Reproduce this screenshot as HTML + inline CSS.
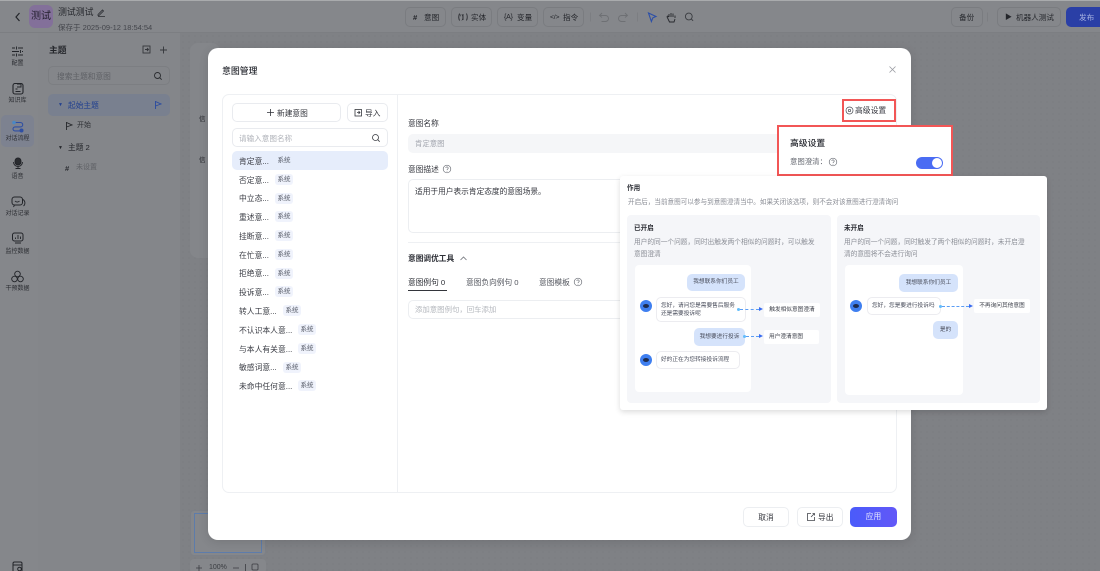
<!DOCTYPE html>
<html lang="zh"><head><meta charset="utf-8"><style>
*{box-sizing:border-box}
html,body{margin:0;padding:0}
body{width:1100px;height:571px;overflow:hidden;position:relative;background:#7f8185;font-family:"Liberation Sans","Noto Sans CJK SC",sans-serif;color:#2a2c33}
#w{position:absolute;left:0;top:0;width:1100px;height:571px;overflow:hidden;filter:blur(.35px)}
.a{position:absolute}
.t{position:absolute;white-space:nowrap;line-height:1.2;transform:translateY(1px)}
svg{position:absolute;overflow:visible;fill:none}
.tag{position:absolute;height:11px;width:18px;background:#f0f3fc;border-radius:3px;font-size:6.5px;line-height:11px;text-align:center;color:#555a66}
.it{position:absolute;left:239px;font-size:7.800px;line-height:10px;color:#3a3c44;white-space:nowrap;transform:translateY(1px)}
.tb{position:absolute;top:7px;height:20px;border:1px solid #7a7c80;border-radius:5px}
.tt{position:absolute;top:12px;font-size:7.600px;line-height:10px;color:#24262b;white-space:nowrap;transform:translateY(1px)}
.side{position:absolute;left:0;width:35px;text-align:center;font-size:6px;color:#2a2c31;line-height:8px;transform:translateY(1px)}
.bub{position:absolute;background:#d5e3fb;border-radius:5px;font-size:5.700px;color:#4a4e5c;text-align:center;white-space:nowrap}
.wb{position:absolute;background:#fff;border:1px solid #ececf0;border-radius:5px;font-size:5.700px;line-height:8px;color:#4a4e5c;white-space:nowrap}
.lab{position:absolute;background:#fff;border-radius:2px;font-size:5.700px;color:#3d404a;text-align:center;white-space:nowrap}
.av{position:absolute;width:12px;height:12px;border-radius:50%;background:#3f7ff0}
.av:after{content:"";position:absolute;left:3px;top:4px;width:6px;height:4px;border-radius:50%;background:#1e2c4e}
.dash{position:absolute;height:0;border-top:1px dashed #5a9df5}
.dot{position:absolute;width:3px;height:3px;border-radius:50%;background:#63bdfb}
.tri{position:absolute;width:0;height:0;border-left:4px solid #3a6cf0;border-top:2.5px solid transparent;border-bottom:2.5px solid transparent}
.d{font-size:6.700px;color:#8b8e96}
</style></head><body><div id="w">

<!-- page background -->
<div class="a" style="left:0;top:0;width:1100px;height:1px;background:#a9abad"></div>
<div class="a" style="left:0;top:1px;width:1100px;height:32px;background:#85878b;border-bottom:1px solid #7c7e82"></div>
<div class="a" style="left:0;top:33px;width:38px;height:538px;background:#85878b"></div>
<div class="a" style="left:38px;top:33px;width:142px;height:538px;background:#84868a"></div>
<div class="a" style="left:180px;top:33px;width:920px;height:538px;background:radial-gradient(#777a7e .6px,transparent .8px) 0 0/6px 6px #7f8185"></div>
<div class="a" style="left:1px;top:115px;width:33px;height:32px;background:#7d8290;border-radius:5px"></div>

<!-- header left -->
<svg style="left:0;top:0" width="30" height="34"><path d="M19.500 13l-3.500 4 3.500 4" stroke="#23252a" stroke-width="1.200"/></svg>
<div class="a" style="left:29px;top:5px;width:24px;height:23px;background:#83709a;border-radius:6px"></div>
<div class="t" style="left:31px;top:10px;font-size:10px;color:#231f2e">测试</div>
<div class="t" style="left:58px;top:6px;font-size:8.900px;color:#24262b">测试测试</div>
<svg style="left:97px;top:8px" width="9" height="9"><path d="M1 6.500l4.500-4.500 1 1L2 7.500H1zM1 8.500h7" stroke="#2a2c31" stroke-width=".8"/></svg>
<div class="t" style="left:58px;top:22px;font-size:7.500px;color:#44464c">保存于 2025-09-12 18:54:54</div>

<!-- toolbar -->
<div class="tb" style="left:405px;width:41px"></div>
<div class="tb" style="left:451px;width:41px"></div>
<div class="tb" style="left:497px;width:41px"></div>
<div class="tb" style="left:543px;width:41px"></div>
<div class="tt" style="left:413px;font-weight:bold">#</div><div class="tt" style="left:424px">意图</div>
<div class="tt" style="left:458px;font-size:6.500px">(ꞌ)</div><div class="tt" style="left:471px">实体</div>
<svg style="left:0;top:0" width="1100" height="34">
<path d="M459.500 13.500q-1.500 3.500 0 7M466.500 13.500q1.500 3.500 0 7M463 14v6" stroke="#2b2d32" stroke-width=".9"/>
</svg>
<div class="tt" style="left:504px;font-size:7px;letter-spacing:-.2px">{A}</div><div class="tt" style="left:517px">变量</div>
<div class="tt" style="left:550px;font-size:6.800px;letter-spacing:-.2px">&lt;/&gt;</div><div class="tt" style="left:563px">指令</div>

<svg style="left:0;top:0" width="1100" height="34">
<path d="M590.500 12.500v9M637.500 12.500v9M987.500 12.500v9" stroke="#797b7f" stroke-width=".7"/>
<path d="M602 13l-2.500 2.500 2.500 2M599.500 15.500h6a3 3 0 0 1 0 6h-4" stroke="#6e7074" stroke-width=".9"/>
<path d="M625 13l2.500 2.500-2.500 2M627.500 15.500h-6a3 3 0 0 0 0 6h4" stroke="#6e7074" stroke-width=".9"/>
<path d="M648.500 13l7.500 3.500-3.200 1.400-1.400 3.600z" stroke="#2c4fa8" stroke-width="1.100"/>
<path d="M669 17v-3M671 17v-4M673 17v-3.500M675 18v-2.500M669 17l-1.200-1-.8.800 2.500 5.200h4.500l1-3" stroke="#26282d" stroke-width=".9"/>
<circle cx="688.800" cy="16.500" r="3.400" stroke="#3a3c41" stroke-width=".9"/>
<path d="M691.300 19l1.800 1.800" stroke="#3a3c41" stroke-width=".9"/>
</svg>
<div class="tb" style="left:951px;width:32px"></div>
<div class="tt" style="left:959px">备份</div>
<div class="tb" style="left:997px;width:64px"></div>
<div class="tt" style="left:1005px;font-size:7px">▶</div>
<div class="tt" style="left:1016px">机器人测试</div>
<div class="a" style="left:1066px;top:7px;width:40px;height:20px;border-radius:5px;background:#2a3fa6"></div>
<div class="tt" style="left:1079px;color:#a9b4e2">发布</div>

<!-- left rail icons -->
<svg style="left:0;top:0" width="36" height="300" stroke="#222429" stroke-width=".9">
<path d="M12 48h3M18 48h5M12 51.500h7M22 51.500h1M12 55h3M18 55h5M16.500 46.500v3M20.500 50v3M16.500 53.500v3"/>
<rect x="13" y="83.500" width="10" height="10.500" rx="2" stroke-width="1.100"/><path d="M17 84h4v3h-4M15.500 89h2M15.500 91.500h5" />
<path d="M15 122.500h5.500a2.200 2.200 0 0 1 0 4.400h-5.500a2 2 0 0 0 0 4h5" stroke="#2f4fa3" stroke-width="1.100"/>
<circle cx="14" cy="122.500" r="1.800" fill="#4b88c4" stroke="none"/><circle cx="21.500" cy="130.500" r="2" fill="#2f4fa3" stroke="none"/>
<rect x="15" y="158" width="6" height="7" rx="3" fill="#2a2c30"/><path d="M13.500 162a4.500 4.500 0 0 0 9 0M18 166.500v2M15.500 168.500h5"/>
<rect x="12" y="197" width="10.500" height="8" rx="2.500" stroke-width="1"/><path d="M14.500 205l-1 2M23 199.500a4 4 0 0 1 .5 6.500M15 201a3 3 0 0 0 4.500 0"/>
<rect x="12.500" y="233" width="10.500" height="8" rx="2" stroke-width="1"/><path d="M15 243h6M15.500 239v-1.500M18 239v-4M20.500 239v-2.500"/>
<circle cx="17.500" cy="274" r="2.800"/><circle cx="14.500" cy="279" r="2.800"/><circle cx="20.500" cy="279" r="2.800"/>
</svg>
<div class="side" style="top:59px">配置</div>
<div class="side" style="top:96px">知识库</div>
<div class="side" style="top:134px">对话流程</div>
<div class="side" style="top:172px">语音</div>
<div class="side" style="top:209px">对话记录</div>
<div class="side" style="top:247px">监控数据</div>
<div class="side" style="top:284px">干预数据</div>
<svg style="left:12px;top:561px" width="12" height="10" stroke="#222429"><rect x="1" y="1" width="9" height="10" rx="1.500" stroke-width="1"/><path d="M1 4h9"/><circle cx="7.500" cy="8" r="1.800" fill="#85878b"/></svg>

<!-- topic panel -->
<div class="t" style="left:49px;top:44px;font-size:8.800px;font-weight:bold;color:#24262b">主题</div>
<svg style="left:142px;top:44px" width="28" height="12" stroke="#34363b" stroke-width=".9"><rect x="1" y="2" width="7" height="7"/><path d="M3 5.500h3.500M5 4l1.500 1.500L5 7M18 6h7M21.500 2.500v7"/></svg>
<div class="a" style="left:48px;top:66px;width:122px;height:19px;border:1px solid #7c7e82;border-radius:5px"></div>
<div class="t" style="left:57px;top:71px;font-size:7.700px;color:#5f6166">搜索主题和意图</div>
<svg style="left:153px;top:71px" width="10" height="10" stroke="#2b2d31" stroke-width=".9"><circle cx="4.500" cy="4.500" r="3"/><path d="M6.700 6.700l2 2"/></svg>
<div class="a" style="left:48px;top:94px;width:122px;height:22px;background:#79808f;border-radius:5px"></div>
<div class="t" style="left:58px;top:101px;font-size:5px;color:#23408f">▼</div>
<div class="t" style="left:68px;top:100px;font-size:7.700px;color:#22408f">起始主题</div>
<svg style="left:154px;top:100px" width="9" height="10" stroke="#2a4aa0" stroke-width=".9"><path d="M1.500 1v8M1.500 1.500l5.500 2.500-5.500 2"/></svg>
<svg style="left:65px;top:121px" width="9" height="10" stroke="#25272b" stroke-width=".9"><path d="M1.500 1v8M1.500 1.500l5.500 2.500-5.500 2"/></svg>
<div class="t" style="left:77px;top:121px;font-size:7px;color:#2c2e33">开始</div>
<div class="t" style="left:58px;top:144px;font-size:5px;color:#24262b">▼</div>
<div class="t" style="left:68px;top:142px;font-size:7.700px;color:#23252a">主题 2</div>
<div class="t" style="left:65px;top:163px;font-size:7.500px;font-weight:bold;color:#2c2e33">#</div>
<div class="t" style="left:76px;top:163px;font-size:7px;color:#5f6166">未设置</div>

<!-- canvas bg -->
<div class="a" style="left:190px;top:43px;width:30px;height:215px;background:#84868a;border-radius:8px"></div>
<div class="t" style="left:199px;top:115px;font-size:6.500px;color:#24262b">信</div>
<div class="t" style="left:199px;top:156px;font-size:6.500px;color:#24262b">信</div>
<div class="a" style="left:190px;top:510px;width:76px;height:46px;background:#85878b;border:1px solid #7c8088;border-radius:4px"></div>
<div class="a" style="left:194px;top:513px;width:68px;height:40px;border:1px solid #5d7cab"></div>
<div class="a" style="left:190px;top:559px;width:76px;height:14px;background:#85878b;border-radius:4px"></div>
<svg style="left:0;top:0" width="300" height="571" stroke="#3b3d42" stroke-width=".8"><path d="M196 568h6M199 565v6M233 568h6M245.500 564v7"/><rect x="252" y="564" width="6" height="6" rx="1"/></svg>
<div class="t" style="left:209px;top:563px;font-size:7px;color:#3b3d42">100%</div>

<!-- modal -->
<div class="a" style="left:208px;top:48px;width:703px;height:492px;background:#fff;border-radius:10px;box-shadow:0 2px 10px rgba(0,0,0,.12)"></div>
<div class="t" style="left:222px;top:65px;font-size:8.900px;font-weight:500;color:#2a2c33">意图管理</div>
<svg style="left:888px;top:65px" width="9" height="9" stroke="#9a9ca2" stroke-width=".8"><path d="M1.500 1.500l6 6M7.500 1.500l-6 6"/></svg>
<div class="a" style="left:222px;top:94px;width:675px;height:399px;border:1px solid #eef0f3;border-radius:7px"></div>
<div class="a" style="left:397px;top:94px;width:1px;height:399px;background:#eef0f3"></div>

<div class="a" style="left:232px;top:103px;width:109px;height:19px;border:1px solid #e9ebef;border-radius:5px"></div>
<svg style="left:266px;top:108px" width="9" height="9" stroke="#2f3138" stroke-width=".8"><path d="M4.500 1v7M1 4.500h7"/></svg>
<div class="t" style="left:277px;top:108px;font-size:7.700px;color:#2f3138">新建意图</div>
<div class="a" style="left:347px;top:103px;width:41px;height:19px;border:1px solid #e9ebef;border-radius:5px"></div>
<svg style="left:354px;top:108px" width="9" height="9" stroke="#34363c" stroke-width=".8"><rect x="1" y="1.500" width="6.500" height="6.500"/><path d="M3 4.500h3M4.500 3l1.500 1.500L4.500 6"/></svg>
<div class="t" style="left:365px;top:108px;font-size:7.700px;color:#2f3138">导入</div>
<div class="a" style="left:232px;top:128px;width:156px;height:19px;border:1px solid #e9ebef;border-radius:5px"></div>
<div class="t" style="left:239px;top:133px;font-size:7.600px;color:#b0b3ba">请输入意图名称</div>
<svg style="left:371px;top:133px" width="10" height="10" stroke="#3a3c42" stroke-width=".8"><circle cx="4.500" cy="4.500" r="3"/><path d="M6.700 6.700l2 2"/></svg>

<div class="a" style="left:232px;top:151px;width:156px;height:19px;background:#e6edfb;border-radius:5px"></div>
<div class="it" style="top:156px">肯定意...</div><div class="tag" style="left:275px;top:155px;background:none">系统</div>
<div class="it" style="top:175px">否定意...</div><div class="tag" style="left:275px;top:174px">系统</div>
<div class="it" style="top:193px">中立态...</div><div class="tag" style="left:275px;top:193px">系统</div>
<div class="it" style="top:212px">重述意...</div><div class="tag" style="left:275px;top:211px">系统</div>
<div class="it" style="top:231px">挂断意...</div><div class="tag" style="left:275px;top:230px">系统</div>
<div class="it" style="top:250px">在忙意...</div><div class="tag" style="left:275px;top:249px">系统</div>
<div class="it" style="top:268px">拒绝意...</div><div class="tag" style="left:275px;top:268px">系统</div>
<div class="it" style="top:287px">投诉意...</div><div class="tag" style="left:275px;top:286px">系统</div>
<div class="it" style="top:306px">转人工意...</div><div class="tag" style="left:283px;top:305px">系统</div>
<div class="it" style="top:325px">不认识本人意...</div><div class="tag" style="left:298px;top:324px">系统</div>
<div class="it" style="top:344px">与本人有关意...</div><div class="tag" style="left:298px;top:343px">系统</div>
<div class="it" style="top:362px">敏感词意...</div><div class="tag" style="left:283px;top:362px">系统</div>
<div class="it" style="top:381px">未命中任何意...</div><div class="tag" style="left:298px;top:380px">系统</div>

<!-- right form -->
<div class="t" style="left:408px;top:118px;font-size:7.700px;color:#33353c">意图名称</div>
<div class="a" style="left:408px;top:134px;width:380px;height:19px;background:#f5f6f8;border-radius:5px"></div>
<div class="t" style="left:415px;top:139px;font-size:7.400px;color:#a2a5ae">肯定意图</div>
<div class="t" style="left:408px;top:164px;font-size:7.700px;color:#33353c">意图描述</div>
<svg style="left:442px;top:164px" width="10" height="10" stroke="#6d7078" stroke-width=".7"><circle cx="5" cy="5" r="3.800"/><path d="M3.800 4a1.200 1.200 0 1 1 1.800 1.100c-.4.300-.6.500-.6 1M5 7.200v.5"/></svg>
<div class="a" style="left:408px;top:179px;width:300px;height:54px;border:1px solid #eceef1;border-radius:5px"></div>
<div class="t" style="left:415px;top:186px;font-size:7.700px;color:#33353c">适用于用户表示肯定态度的意图场景。</div>
<div class="a" style="left:408px;top:242px;width:480px;height:1px;background:#eef0f3"></div>
<div class="t" style="left:408px;top:253px;font-size:7.700px;font-weight:bold;color:#2f3138">意图调优工具</div>
<svg style="left:459px;top:254px" width="9" height="9" stroke="#70737a" stroke-width=".8"><path d="M1.500 6l3-3 3 3"/></svg>
<div class="t" style="left:408px;top:277px;font-size:7.700px;color:#2a2c33">意图例句 0</div>
<div class="a" style="left:408px;top:290px;width:39px;height:1px;background:#33353b"></div>
<div class="t" style="left:466px;top:277px;font-size:7.700px;color:#54575f">意图负向例句 0</div>
<div class="t" style="left:539px;top:277px;font-size:7.700px;color:#54575f">意图模板</div>
<svg style="left:573px;top:277px" width="10" height="10" stroke="#6d7078" stroke-width=".7"><circle cx="5" cy="5" r="3.800"/><path d="M3.800 4a1.200 1.200 0 1 1 1.800 1.100c-.4.300-.6.500-.6 1M5 7.200v.5"/></svg>
<div class="a" style="left:408px;top:300px;width:300px;height:19px;border:1px solid #eceef1;border-radius:5px"></div>
<div class="t" style="left:415px;top:305px;font-size:7.400px;color:#b5b8be">添加意图例句，回车添加</div>

<!-- 高级设置 button -->
<div class="a" style="left:842px;top:99px;width:54px;height:23px;border:2px solid #f25656"></div>
<svg style="left:845px;top:106px" width="9" height="9" stroke="#4a4d55" stroke-width=".7"><circle cx="4.500" cy="4.500" r="3.500"/><circle cx="4.500" cy="4.500" r="1.200"/></svg>
<div class="t" style="left:855px;top:105px;font-size:7.800px;color:#33353c">高级设置</div>

<!-- popover -->
<div class="a" style="left:777px;top:125px;width:176px;height:51px;background:#fff;border:2px solid #f25656"></div>
<div class="t" style="left:790px;top:137px;font-size:8.800px;font-weight:500;color:#2a2c33">高级设置</div>
<div class="t" style="left:790px;top:157px;font-size:7.400px;color:#6a6d75">意图澄清：</div>
<svg style="left:828px;top:157px" width="10" height="10" stroke="#6d7078" stroke-width=".7"><circle cx="5" cy="5" r="3.800"/><path d="M3.800 4a1.200 1.200 0 1 1 1.800 1.100c-.4.300-.6.500-.6 1M5 7.200v.5"/></svg>
<div class="a" style="left:916px;top:157px;width:27px;height:12px;background:#4a6cf3;border-radius:6px"></div>
<div class="a" style="left:932px;top:158px;width:10px;height:10px;background:#fff;border-radius:5px"></div>

<!-- tooltip -->
<div class="a" style="left:620px;top:176px;width:427px;height:234px;background:#fff;border-radius:3px;box-shadow:0 2px 6px rgba(0,0,0,.14)"></div>
<div class="t" style="left:627px;top:184px;font-size:6.600px;font-weight:bold;color:#2a2c33">作用</div>
<div class="t d" style="left:628px;top:198px;font-size:6.600px">开启后，当前意图可以参与到意图澄清当中。如果关闭该选项，则不会对该意图进行澄清询问</div>

<div class="a" style="left:627px;top:215px;width:204px;height:188px;background:#f5f6f9;border-radius:4px"></div>
<div class="a" style="left:837px;top:215px;width:203px;height:188px;background:#f5f6f9;border-radius:4px"></div>

<div class="t" style="left:634px;top:224px;font-size:6.600px;font-weight:bold;color:#2a2c33">已开启</div>
<div class="t d" style="left:634px;top:236px;line-height:12px;white-space:normal;width:185px">用户的同一个问题，同时出触发两个相似的问题时，可以触发意图澄清</div>
<div class="a" style="left:635px;top:265px;width:116px;height:127px;background:#fff;border-radius:4px"></div>
<div class="bub" style="left:687px;top:274px;width:58px;height:17px;line-height:17px">我想联系你们员工</div>
<div class="av" style="left:640px;top:300px"></div>
<div class="wb" style="left:656px;top:297px;width:90px;height:25px;padding:4px 4px">您好，请问您是需要售后服务<br>还是需要投诉呢</div>
<div class="dot" style="left:737px;top:308px"></div><div class="dash" style="left:740px;top:309px;width:19px"></div><div class="tri" style="left:759px;top:307px"></div>
<div class="lab" style="left:764px;top:303px;width:56px;height:14px;line-height:14px">触发相似意图澄清</div>
<div class="bub" style="left:694px;top:328px;width:51px;height:18px;line-height:18px">我想要进行投诉</div>
<div class="dot" style="left:743px;top:335px"></div><div class="dash" style="left:746px;top:336px;width:13px"></div><div class="tri" style="left:759px;top:334px"></div>
<div class="lab" style="left:764px;top:330px;width:55px;height:14px;line-height:14px;text-align:left;padding-left:5px">用户澄清意图</div>
<div class="av" style="left:640px;top:354px"></div>
<div class="wb" style="left:656px;top:351px;width:84px;height:18px;line-height:16px;padding-left:4px">好的正在为您转接投诉流程</div>

<div class="t" style="left:844px;top:224px;font-size:6.600px;font-weight:bold;color:#2a2c33">未开启</div>
<div class="t d" style="left:844px;top:236px;line-height:12px;white-space:normal;width:185px">用户的同一个问题，同时触发了两个相似的问题时，未开启澄清的意图将不会进行询问</div>
<div class="a" style="left:845px;top:265px;width:118px;height:130px;background:#fff;border-radius:4px"></div>
<div class="bub" style="left:899px;top:274px;width:59px;height:18px;line-height:18px">我想联系你们员工</div>
<div class="av" style="left:850px;top:300px"></div>
<div class="wb" style="left:867px;top:297px;width:74px;height:18px;line-height:16px;padding-left:4px">您好，您是要进行投诉吗</div>
<div class="dot" style="left:939px;top:305px"></div><div class="dash" style="left:942px;top:306px;width:27px"></div><div class="tri" style="left:969px;top:304px"></div>
<div class="lab" style="left:974px;top:299px;width:56px;height:14px;line-height:14px">不再询问其他意图</div>
<div class="bub" style="left:933px;top:321px;width:25px;height:18px;line-height:18px">是的</div>

<!-- footer buttons -->
<div class="a" style="left:743px;top:507px;width:46px;height:20px;border:1px solid #eceef1;border-radius:5px;font-size:7.700px;line-height:19px;text-align:center;color:#33353c">取消</div>
<div class="a" style="left:797px;top:507px;width:46px;height:20px;border:1px solid #eceef1;border-radius:5px;font-size:7.700px;line-height:19px;color:#33353c;padding-left:20px">导出</div>
<svg style="left:806px;top:512px" width="10" height="10" stroke="#43454c" stroke-width=".8"><path d="M5 1.500H1.500v7h7V5M5 5l3.500-3.500M6.500 1.500h2v2"/></svg>
<div class="a" style="left:850px;top:507px;width:47px;height:20px;border-radius:5px;background:linear-gradient(90deg,#4a5bfa,#6258f8);font-size:7.700px;line-height:20px;text-align:center;color:#eef0ff">应用</div>

</div></body></html>
